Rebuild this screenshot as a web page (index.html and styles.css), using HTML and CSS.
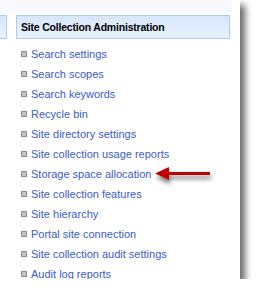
FILE: index.html
```html
<!DOCTYPE html>
<html>
<head>
<meta charset="utf-8">
<title>Site Collection Administration</title>
<link rel="stylesheet" href="styles.css">
</head>
<body>
<div class="page">
  <div class="topband"></div>
  <div class="heads">
    <div class="head stub"></div>
    <div class="head main">Site Collection Administration</div>
  </div>
  <ul class="links">
    <li><a href="#">Search settings</a></li>
    <li><a href="#">Search scopes</a></li>
    <li><a href="#">Search keywords</a></li>
    <li><a href="#">Recycle bin</a></li>
    <li><a href="#">Site directory settings</a></li>
    <li><a href="#">Site collection usage reports</a></li>
    <li><a href="#">Storage space allocation</a></li>
    <li><a href="#">Site collection features</a></li>
    <li><a href="#">Site hierarchy</a></li>
    <li><a href="#">Portal site connection</a></li>
    <li><a href="#">Site collection audit settings</a></li>
    <li><a href="#">Audit log reports</a></li>
  </ul>
  <svg class="arrow" width="64" height="24" viewBox="0 0 64 24">
    <path d="M14 7 L56 7 L56 10 L14 10 Z M1 8.5 L15 2 L15 15 Z" fill="#c00000"/>
  </svg>
</div>
</body>
</html>
```
FILE: styles.css
```css
body {
	margin:0;
	background:#fff;
	font-family:"Liberation Sans", sans-serif;
	font-size:11px;
}
.page {
	position:relative;
	width:240px;
	height:279px;
	overflow:hidden;
	background:#fff;
	box-shadow:5px 5px 7px rgba(0,0,0,0.6);
}
.topband {
	width:232px;
	height:13px;
	background:#f7f9fe;
}
.heads {
	display:flex;
	margin-top:2px;
	gap:9px;
}
.head {
	height:22px;
	border:1px solid #a9cdf4;
	background:linear-gradient(#d7e6fc, #e8f1fe);
}
.stub {
	width:6px;
	border-left:none;
}
.main {
	padding-left:4px;
	width:208px;
	line-height:22px;
	font-weight:bold;
	font-size:10.5px;
	letter-spacing:-0.2px;
	color:#000;
}
.links {
	list-style:none;
	margin:5px 0 0;
	padding:0 0 0 21px;
}
.links li {
	display:flex;
	align-items:center;
	height:20px;
}
.links li::before {
	content:"";
	width:4px;
	height:4px;
	border:1px solid #8c8c8c;
	background:#c4c4c4;
	margin-right:4px;
	flex:none;
}
.links a {
	font-size:11px;
	color:#3a5ccc;
	text-decoration:none;
}
.arrow {
	position:absolute;
	left:154px;
	top:165px;
	filter:drop-shadow(1px 4px 2px rgba(0,0,0,0.5));
}
```
